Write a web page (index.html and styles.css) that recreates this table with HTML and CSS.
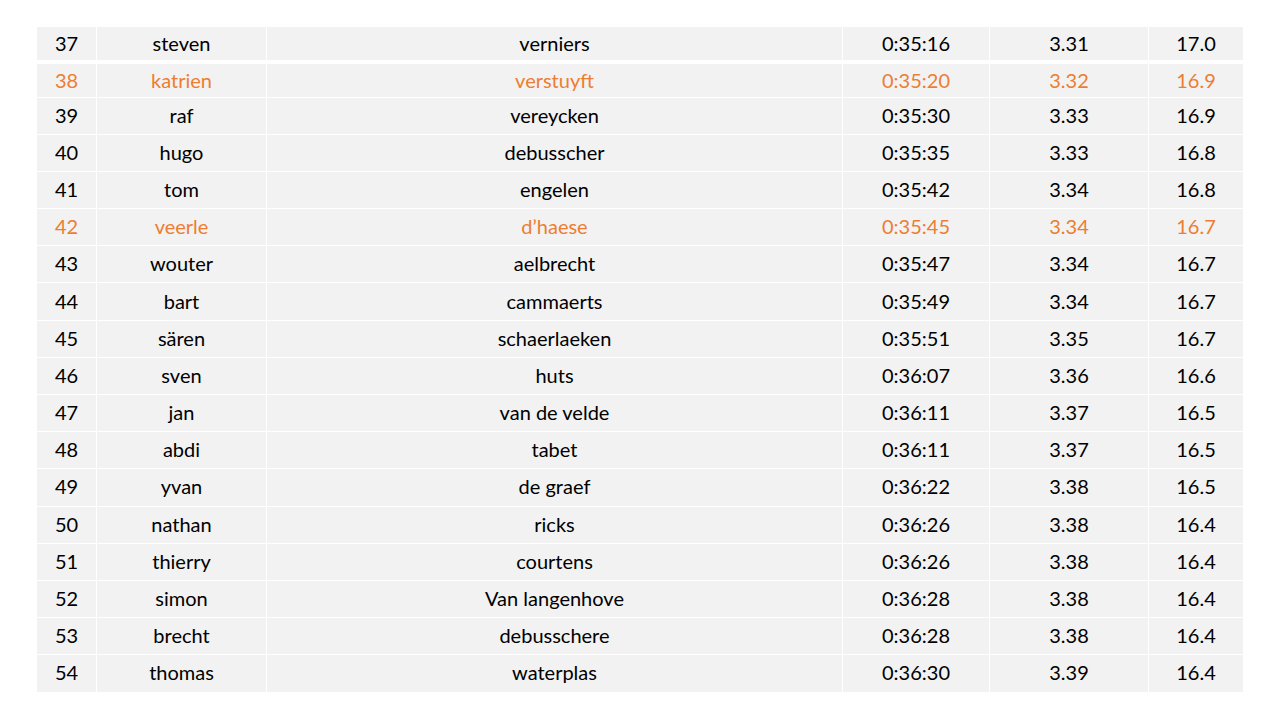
FILE: index.html
```html
<!DOCTYPE html>
<html lang="nl">
<head>
<meta charset="utf-8">
<title>Uitslag</title>
<link rel="stylesheet" href="styles.css">
</head>
<body>
<div class="results">
  <div class="row first"><div class="c">37</div><div class="c">steven</div><div class="c">verniers</div><div class="c">0:35:16</div><div class="c">3.31</div><div class="c">17.0</div></div>
  <div class="row short hl"><div class="c">38</div><div class="c">katrien</div><div class="c">verstuyft</div><div class="c">0:35:20</div><div class="c">3.32</div><div class="c">16.9</div></div>
  <div class="row"><div class="c">39</div><div class="c">raf</div><div class="c">vereycken</div><div class="c">0:35:30</div><div class="c">3.33</div><div class="c">16.9</div></div>
  <div class="row"><div class="c">40</div><div class="c">hugo</div><div class="c">debusscher</div><div class="c">0:35:35</div><div class="c">3.33</div><div class="c">16.8</div></div>
  <div class="row"><div class="c">41</div><div class="c">tom</div><div class="c">engelen</div><div class="c">0:35:42</div><div class="c">3.34</div><div class="c">16.8</div></div>
  <div class="row hl"><div class="c">42</div><div class="c">veerle</div><div class="c">d’haese</div><div class="c">0:35:45</div><div class="c">3.34</div><div class="c">16.7</div></div>
  <div class="row"><div class="c">43</div><div class="c">wouter</div><div class="c">aelbrecht</div><div class="c">0:35:47</div><div class="c">3.34</div><div class="c">16.7</div></div>
  <div class="row"><div class="c">44</div><div class="c">bart</div><div class="c">cammaerts</div><div class="c">0:35:49</div><div class="c">3.34</div><div class="c">16.7</div></div>
  <div class="row"><div class="c">45</div><div class="c">sären</div><div class="c">schaerlaeken</div><div class="c">0:35:51</div><div class="c">3.35</div><div class="c">16.7</div></div>
  <div class="row"><div class="c">46</div><div class="c">sven</div><div class="c">huts</div><div class="c">0:36:07</div><div class="c">3.36</div><div class="c">16.6</div></div>
  <div class="row"><div class="c">47</div><div class="c">jan</div><div class="c">van de velde</div><div class="c">0:36:11</div><div class="c">3.37</div><div class="c">16.5</div></div>
  <div class="row"><div class="c">48</div><div class="c">abdi</div><div class="c">tabet</div><div class="c">0:36:11</div><div class="c">3.37</div><div class="c">16.5</div></div>
  <div class="row"><div class="c">49</div><div class="c">yvan</div><div class="c">de graef</div><div class="c">0:36:22</div><div class="c">3.38</div><div class="c">16.5</div></div>
  <div class="row"><div class="c">50</div><div class="c">nathan</div><div class="c">ricks</div><div class="c">0:36:26</div><div class="c">3.38</div><div class="c">16.4</div></div>
  <div class="row"><div class="c">51</div><div class="c">thierry</div><div class="c">courtens</div><div class="c">0:36:26</div><div class="c">3.38</div><div class="c">16.4</div></div>
  <div class="row"><div class="c">52</div><div class="c">simon</div><div class="c">Van langenhove</div><div class="c">0:36:28</div><div class="c">3.38</div><div class="c">16.4</div></div>
  <div class="row"><div class="c">53</div><div class="c">brecht</div><div class="c">debusschere</div><div class="c">0:36:28</div><div class="c">3.38</div><div class="c">16.4</div></div>
  <div class="row"><div class="c">54</div><div class="c">thomas</div><div class="c">waterplas</div><div class="c">0:36:30</div><div class="c">3.39</div><div class="c">16.4</div></div>
</div>
</body>
</html>
```

FILE: styles.css
```css
html, body {
  margin: 0;
  padding: 0;
  background: #ffffff;
}

body {
  font-family: Lato, "Open Sans", "Liberation Sans", sans-serif;
  font-size: 20px;
  color: #000000;
}

.results {
  display: flex;
  flex-direction: column;
  gap: 1px;
  width: 1206px;
  margin: 27px 0 0 37px;
}

.row {
  display: grid;
  grid-template-columns: 59px 169px 575px 146px 158px 94px;
  column-gap: 1px;
  height: 36.2px;
}

.row.first {
  height: 32.5px;
  margin-bottom: 3px;
}

.row.short {
  height: 33px;
}

.c {
  background: #f2f2f2;
  display: flex;
  align-items: center;
  justify-content: center;
  padding-bottom: 2px;
  box-sizing: border-box;
  white-space: nowrap;
}

.row.first .c {
  padding-bottom: 0;
}

.row.short .c {
  padding-bottom: 1px;
}

.row.hl .c {
  color: #ed7d31;
}
```
